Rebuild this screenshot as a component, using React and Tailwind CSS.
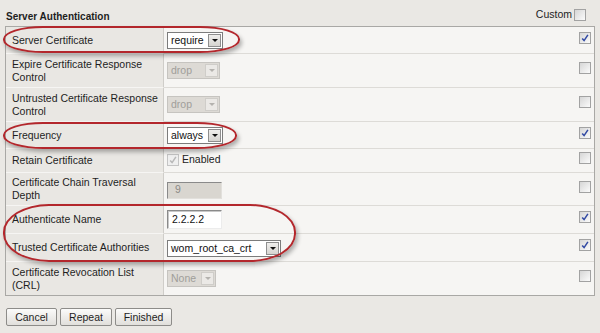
import React from 'react';

const rows = [
  { h: 'h-[26px]', label: ['Server Certificate'], value: 'require', checked: true },
  { h: 'h-[34px]', label: ['Expire Certificate Response', 'Control'], value: 'drop-dis', checked: false },
  { h: 'h-[34px]', label: ['Untrusted Certificate Response', 'Control'], value: 'drop-dis', checked: false },
  { h: 'h-[27px]', label: ['Frequency'], value: 'always', checked: true },
  { h: 'h-[24px]', label: ['Retain Certificate'], value: 'enabled', checked: false },
  { h: 'h-[33px]', label: ['Certificate Chain Traversal', 'Depth'], value: 'depth', checked: false },
  { h: 'h-[28px]', label: ['Authenticate Name'], value: 'name', checked: true },
  { h: 'h-[28px]', label: ['Trusted Certificate Authorities'], value: 'ca', checked: true },
  { h: 'h-[34px]', label: ['Certificate Revocation List', '(CRL)'], value: 'crl', checked: false },
];

function Box({ checked, disabled, className = '' }) {
  return (
    <span
      className={`relative inline-block w-[12px] h-[12px] border ${
        disabled ? 'border-[#c4c4c4] bg-[#efefef]' : 'border-[#a2a2a2] bg-gradient-to-br from-[#d6d6d6] to-[#fbfbfb]'
      } ${className}`}
    >
      {checked && (
        <svg viewBox="0 0 12 12" className="absolute -left-px -top-px w-[12px] h-[12px]">
          <path
            d="M3.2 6.4 L5.1 8.6 L8.9 2.8"
            fill="none"
            stroke={disabled ? '#b8b8b8' : '#3149a3'}
            strokeWidth="1.5"
          />
        </svg>
      )}
    </span>
  );
}

function Select({ text, width, disabled }) {
  return (
    <div
      className={`flex items-center h-[17px] ${width} border pl-[3px] pr-px ${
        disabled ? 'border-[#c6c4c0] bg-[#dddad5] text-[#a09e9a]' : 'border-[#7c7c7c] bg-white text-[#111]'
      }`}
    >
      <span className="flex-1 leading-none">{text}</span>
      <span
        className={`flex items-center justify-center w-[13px] h-[13px] border ${
          disabled ? 'border-[#cfcdc9] bg-[#ebe9e6]' : 'border-[#8e8e8e] bg-gradient-to-b from-[#efeeec] to-[#d6d4d0]'
        }`}
      >
        <span
          className={`w-0 h-0 border-x-[3px] border-x-transparent border-t-[3px] ${
            disabled ? 'border-t-[#b4b2ae]' : 'border-t-[#111]'
          }`}
        />
      </span>
    </div>
  );
}

function Value({ kind }) {
  if (kind === 'require') return <Select text="require" width="w-[56px]" />;
  if (kind === 'always') return <Select text="always" width="w-[56px]" />;
  if (kind === 'drop-dis') return <Select text="drop" width="w-[53px]" disabled />;
  if (kind === 'crl') return <Select text="None" width="w-[49px]" disabled />;
  if (kind === 'ca') return <div className="mt-[2px]"><Select text="wom_root_ca_crt" width="w-[114px]" /></div>;
  if (kind === 'enabled')
    return (
      <div className="flex items-center gap-[3px] mb-[2px]">
        <Box checked disabled />
        <span className="text-[#222]">Enabled</span>
      </div>
    );
  if (kind === 'depth')
    return (
      <div className="flex items-center w-[55px] h-[17px] mt-[2px] border border-[#8a8a8a] border-b-[#e2e0dc] border-r-[#e2e0dc] bg-[#d9d6d0] pl-[7px] text-[#8c8a86]">
        9
      </div>
    );
  if (kind === 'name')
    return (
      <div className="flex items-center w-[55px] h-[19px] border border-[#8a8a8a] border-b-[#ececec] border-r-[#ececec] bg-white pl-[4px] text-[#111] shadow-[inset_1px_1px_0_#c8c8c8]">
        2.2.2.2
      </div>
    );
  return null;
}

export default function App() {
  return (
    <div className="relative w-[600px] h-[333px] overflow-hidden bg-[#eae8e4] font-['Liberation_Sans',Arial,sans-serif] text-[10.5px] text-[#1e1e1e]">
      <div className="flex items-start justify-between h-[26px] pl-[6px] pr-[14px]">
        <div className="pt-[11px] text-[10px] font-bold leading-[12px]">Server Authentication</div>
        <div className="flex items-center gap-[2px] pt-[7px]">
          <span>Custom</span>
          <Box />
        </div>
      </div>

      <div className="ml-[5px] w-[590px] border border-[#a9a8a5]">
        {rows.map((r, i) => (
          <div key={i} className={`flex ${r.h}`}>
            <div
              className={`flex flex-col justify-center w-[158px] pl-[6px] leading-[13px] bg-[#e9e7e3] border-r border-r-[#cfcdc9] ${
                i ? 'border-t border-t-[#f6f5f3]' : ''
              }`}
            >
              {r.label.map((l) => (
                <span key={l}>{l}</span>
              ))}
            </div>
            <div
              className={`flex flex-1 items-center justify-between pl-[3px] pr-[3px] bg-[#f6f5f3] ${
                i ? 'border-t border-t-[#dddbd7]' : ''
              }`}
            >
              <Value kind={r.value} />
              <Box checked={r.checked} className="mb-[5px]" />
            </div>
          </div>
        ))}
      </div>

      <div className="flex gap-[3px] ml-[6px] mt-[12px]">
        {[
          ['Cancel', 'w-[51px]'],
          ['Repeat', 'w-[52px]'],
          ['Finished', 'w-[57px]'],
        ].map(([t, w]) => (
          <button
            key={t}
            className={`${w} h-[18px] border border-[#8d8c89] rounded-[2px] bg-gradient-to-b from-[#fbfbfa] to-[#e1dfdb] text-[10.5px] text-[#1e1e1e] leading-none`}
          >
            {t}
          </button>
        ))}
      </div>

      <div className="absolute left-[3px] top-[26px] w-[237px] h-[27px] border-2 border-[#b3272c] rounded-[40px/13px] shadow-[2px_3px_4px_rgba(0,0,0,0.3)]" />
      <div className="absolute left-[3px] top-[122px] w-[234px] h-[27px] border-2 border-[#b3272c] rounded-[40px/13px] shadow-[2px_3px_4px_rgba(0,0,0,0.3)]" />
      <div className="absolute left-[3px] top-[204px] w-[293px] h-[58px] border-2 border-[#b3272c] rounded-[46px/28px] shadow-[2px_3px_4px_rgba(0,0,0,0.3)]" />
    </div>
  );
}
